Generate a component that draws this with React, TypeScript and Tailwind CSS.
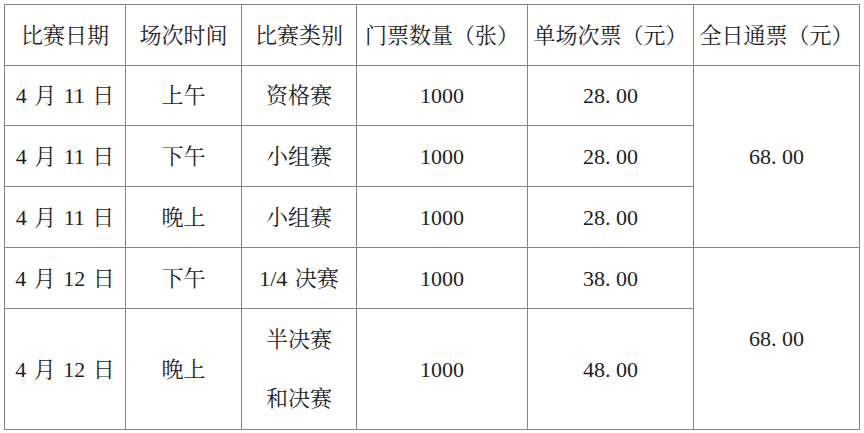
import React from "react";

const font = {
  fontFamily:
    '"Liberation Serif", "Noto Serif CJK SC", "Noto Sans CJK SC", serif',
};

function Money({ v }: { v: string }) {
  const [a, b] = v.split(".");
  return (
    <span>
      {a}
      <span className="inline-block w-[0.5em] text-left">.</span>
      {b}
    </span>
  );
}

const cell =
  "border border-[#858585] text-center align-middle p-0 font-normal [word-spacing:2px]";

export default function App() {
  const headers = [
    "比赛日期",
    "场次时间",
    "比赛类别",
    "门票数量（张）",
    "单场次票（元）",
    "全日通票（元）",
  ];
  return (
    <div className="bg-white w-[864px] h-[433px] pt-[4px] pl-[4px]" style={font}>
      <table className="border-collapse table-fixed w-[855px] text-[22px] text-[#1e1e1e]">
        <colgroup>
          <col className="w-[121px]" />
          <col className="w-[116px]" />
          <col className="w-[115px]" />
          <col className="w-[171px]" />
          <col className="w-[166px]" />
          <col className="w-[166px]" />
        </colgroup>
        <thead>
          <tr className="h-[61px]">
            {headers.map((h) => (
              <th key={h} className={cell}>
                {h}
              </th>
            ))}
          </tr>
        </thead>
        <tbody>
          <tr className="h-[60px]">
            <td className={cell}>4 月 11 日</td>
            <td className={cell}>上午</td>
            <td className={cell}>资格赛</td>
            <td className={cell}>1000</td>
            <td className={cell}>
              <Money v="28.00" />
            </td>
            <td className={cell} rowSpan={3}>
              <Money v="68.00" />
            </td>
          </tr>
          <tr className="h-[61px]">
            <td className={cell}>4 月 11 日</td>
            <td className={cell}>下午</td>
            <td className={cell}>小组赛</td>
            <td className={cell}>1000</td>
            <td className={cell}>
              <Money v="28.00" />
            </td>
          </tr>
          <tr className="h-[61px]">
            <td className={cell}>4 月 11 日</td>
            <td className={cell}>晚上</td>
            <td className={cell}>小组赛</td>
            <td className={cell}>1000</td>
            <td className={cell}>
              <Money v="28.00" />
            </td>
          </tr>
          <tr className="h-[61px]">
            <td className={cell}>4 月 12 日</td>
            <td className={cell}>下午</td>
            <td className={cell}>1/4 决赛</td>
            <td className={cell}>1000</td>
            <td className={cell}>
              <Money v="38.00" />
            </td>
            <td className={cell} rowSpan={2}>
              <Money v="68.00" />
            </td>
          </tr>
          <tr className="h-[121px]">
            <td className={cell}>4 月 12 日</td>
            <td className={cell}>晚上</td>
            <td className={cell}>
              <div className="leading-[59px]">
                半决赛
                <br />
                和决赛
              </div>
            </td>
            <td className={cell}>1000</td>
            <td className={cell}>
              <Money v="48.00" />
            </td>
          </tr>
        </tbody>
      </table>
    </div>
  );
}
